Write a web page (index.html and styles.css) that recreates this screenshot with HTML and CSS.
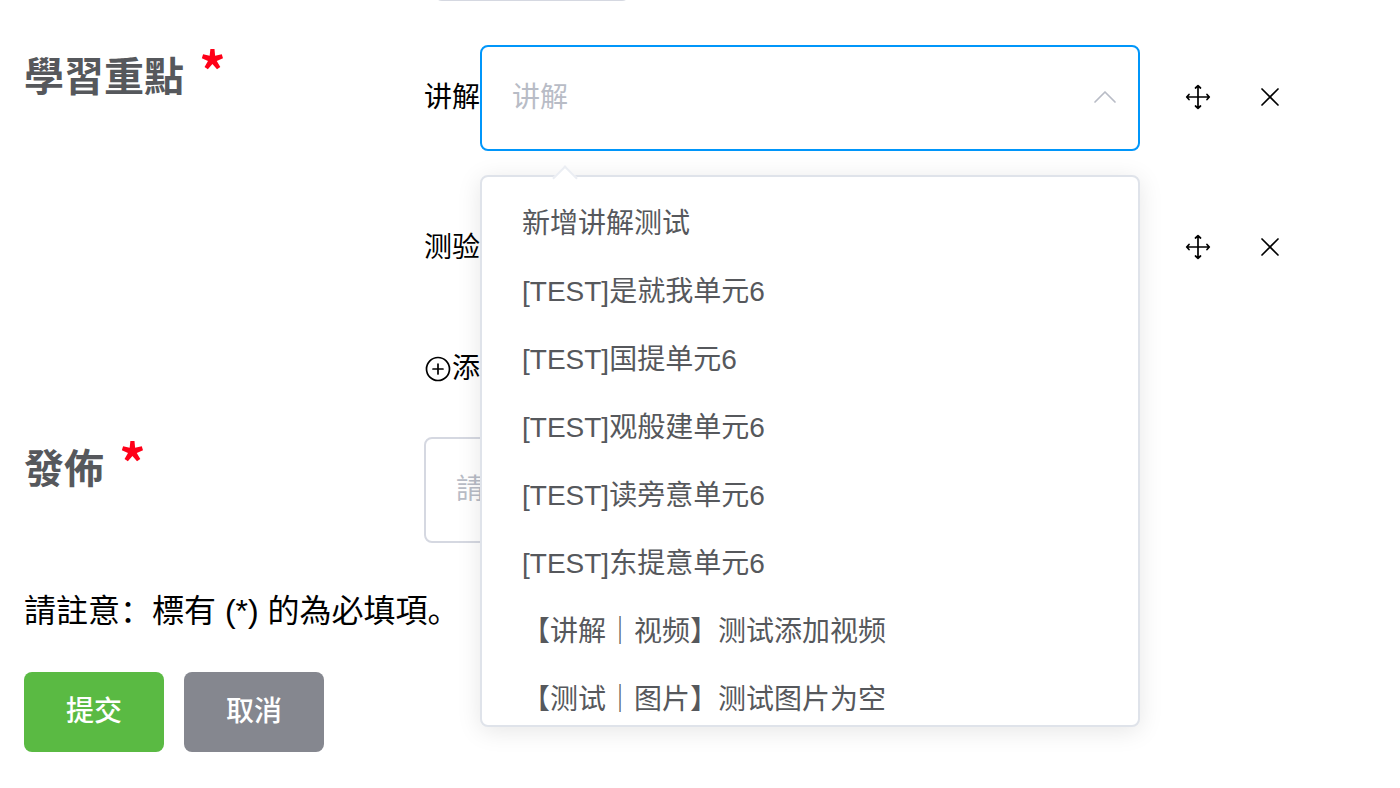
FILE: index.html
```html
<!DOCTYPE html>
<html lang="zh-Hans">
<head>
    <meta charset="utf-8">
    <title>學習重點</title>
    <link rel="stylesheet" href="styles.css">
</head>
<body>
    <svg class="icon-defs" aria-hidden="true">
        <symbol id="icon-move" viewBox="0 0 28 28">
            <path d="M14 3v22M3 14h22M11.5 5L14 2.700l2.500 2.300M11.500 23l2.500 2.300 2.500-2.300M5 11.500L2.700 14 5 16.500M23 11.500l2.300 2.500-2.300 2.500"/>
        </symbol>
        <symbol id="icon-close" viewBox="0 0 28 28">
            <path d="M6 6l16 16M22 6L6 22"/>
        </symbol>
        <symbol id="icon-plus" viewBox="0 0 28 28">
            <circle cx="14" cy="14" r="11.5"/>
            <path d="M14 9v10M9 14h10"/>
        </symbol>
    </svg>

    <form class="unit-form">
        <div class="previous-row">
            <div class="previous-field"></div>
        </div>

        <div class="form-item">
            <div class="form-label">學習重點 <span class="required">*</span></div>
            <div class="form-content">
                <div class="step-row">
                    <label for="explain">讲解</label>
                    <div class="select">
                        <input class="field active" id="explain" type="text" placeholder="讲解" role="combobox" aria-expanded="true" aria-controls="explainMenu" readonly>
                        <svg class="arrow" viewBox="0 0 24 24"><path d="M2 17L12 7l10 10"/></svg>
                        <div class="dropdown">
                            <ul class="option-list" id="explainMenu" role="listbox">
                                <li role="option">新增讲解测试</li>
                                <li role="option">[TEST]是就我单元6</li>
                                <li role="option">[TEST]国提单元6</li>
                                <li role="option">[TEST]观般建单元6</li>
                                <li role="option">[TEST]读旁意单元6</li>
                                <li role="option">[TEST]东提意单元6</li>
                                <li role="option">【讲解｜视频】测试添加视频</li>
                                <li role="option">【测试｜图片】测试图片为空</li>
                            </ul>
                        </div>
                    </div>
                    <button class="icon-btn" type="button" aria-label="移动"><svg><use href="#icon-move"/></svg></button>
                    <button class="icon-btn" type="button" aria-label="删除"><svg><use href="#icon-close"/></svg></button>
                </div>
                <div class="step-row">
                    <label for="quiz">测验</label>
                    <div class="select">
                        <input class="field" id="quiz" type="text" role="combobox" aria-expanded="false" readonly>
                    </div>
                    <button class="icon-btn" type="button" aria-label="移动"><svg><use href="#icon-move"/></svg></button>
                    <button class="icon-btn" type="button" aria-label="删除"><svg><use href="#icon-close"/></svg></button>
                </div>
                <button class="add-btn" type="button"><svg><use href="#icon-plus"/></svg>添加</button>
            </div>
        </div>

        <div class="form-item">
            <label class="form-label" for="publish">發佈 <span class="required">*</span></label>
            <div class="form-content">
                <input class="field publish-field" id="publish" type="text" placeholder="請選擇" readonly>
            </div>
        </div>

        <p class="note">請註意：標有 (*) 的為必填項。</p>

        <div class="actions">
            <button class="btn btn-submit" type="submit">提交</button>
            <button class="btn btn-cancel" type="button">取消</button>
        </div>
    </form>
</body>
</html>
```
FILE: styles.css
```css
* {
    margin: 0;
    padding: 0;
    box-sizing: border-box;
}

body {
    background: #fff;
    color: #000;
    font-family: "Liberation Sans", "Noto Sans CJK SC", sans-serif;
    font-size: 28px;
    line-height: 48px;
}

input,
button {
    font: inherit;
    color: inherit;
}

button {
    border: none;
    background: none;
    cursor: pointer;
}

svg {
    display: block;
    width: 28px;
    height: 28px;
    fill: none;
    stroke: currentColor;
    stroke-width: 1.7;
    stroke-linecap: round;
    stroke-linejoin: round;
}

.icon-defs {
    display: none;
}

.unit-form {
    padding: 0 24px 36px;
}

/* only the bottom edge of this row stays visible */
.previous-row {
    display: flex;
    align-items: flex-end;
    height: 1px;
    margin-bottom: 44px;
    padding-left: 410px;
    overflow: hidden;
}

.previous-field {
    flex: none;
    width: 196px;
    height: 40px;
    border: 2px solid #d5d8e1;
    border-radius: 8px;
}

.form-item {
    display: flex;
    align-items: flex-start;
    margin-bottom: 44px;
}

.form-label {
    flex: none;
    width: 400px;
    padding-top: 8px;
    color: #56585c;
    font-size: 40px;
    font-weight: bold;
}

.required {
    margin-left: 4px;
    color: #ff0018;
    font-family: "Noto Sans CJK SC", sans-serif;
    font-size: 52px;
    line-height: 0;
}

.form-content {
    flex: 1;
    max-width: 860px;
}

.step-row {
    display: flex;
    align-items: center;
    margin-bottom: 44px;
}

.select {
    position: relative;
    flex: 1;
}

.field {
    display: block;
    width: 100%;
    height: 106px;
    padding: 0 30px;
    border: 2px solid #d5d8e1;
    border-radius: 8px;
    background: #fff;
    outline: none;
}

.field.active {
    border-color: #0096fa;
}

.field::placeholder {
    color: #b8bcc6;
    opacity: 1;
}

.publish-field {
    max-width: 660px;
}

.arrow {
    position: absolute;
    top: 40px;
    right: 23px;
    width: 24px;
    height: 24px;
    color: #b8bcc6;
}

.icon-btn {
    margin-left: 44px;
    padding-bottom: 2px;
}

/* dropdown panel */
.dropdown {
    position: absolute;
    top: 100%;
    left: 0;
    z-index: 10;
    width: 100%;
    margin-top: 24px;
    border: 2px solid #dfe3ea;
    border-radius: 8px;
    background: #fff;
    box-shadow: 0 4px 24px rgba(0, 0, 0, 0.1);
}

.dropdown::before {
    content: '';
    position: absolute;
    top: -8px;
    left: 74px;
    width: 16px;
    height: 16px;
    border-top: 2px solid #ebeef3;
    border-left: 2px solid #ebeef3;
    background: #fff;
    transform: rotate(45deg);
}

.option-list {
    position: relative;
    max-height: 548px;
    padding-top: 13px;
    border-radius: 6px;
    list-style: none;
    overflow: hidden;
}

.option-list li {
    padding: 0 40px;
    color: #56585c;
    line-height: 68px;
    white-space: nowrap;
    cursor: pointer;
}

.add-btn {
    display: flex;
    align-items: center;
}

.note {
    margin-bottom: 37px;
    font-size: 32px;
}

.actions {
    display: flex;
    gap: 20px;
}

.btn {
    width: 140px;
    height: 80px;
    border-radius: 8px;
    color: #fff;
    font-weight: 500;
}

.btn-submit {
    background: #5aba43;
}

.btn-cancel {
    background: #85878f;
}
```
